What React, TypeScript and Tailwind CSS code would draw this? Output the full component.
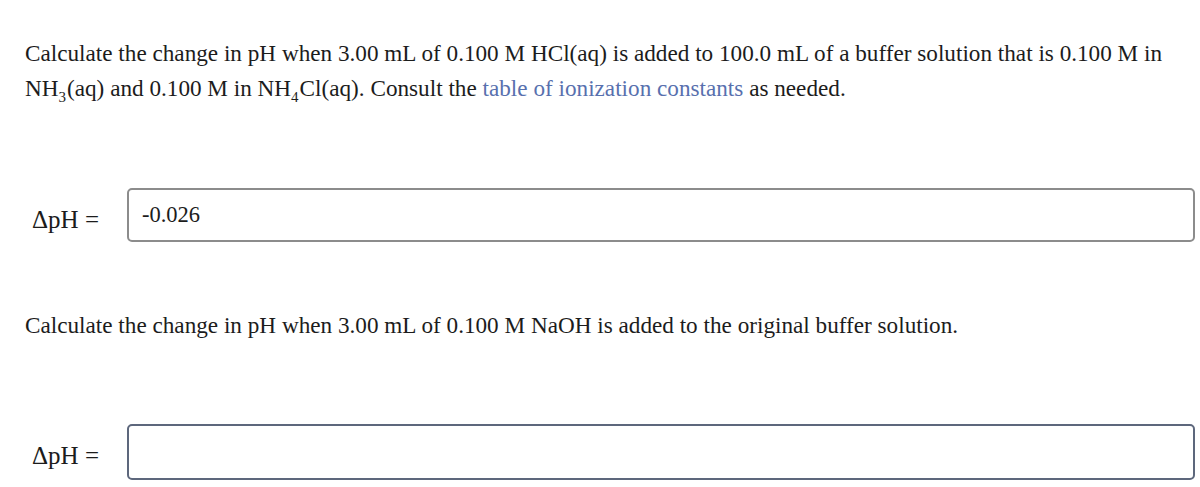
import React from 'react';

const serif = { fontFamily: '"Liberation Serif", "Times New Roman", serif' };

const Sub: React.FC<{ children: React.ReactNode }> = ({ children }) => (
  <span className="text-[15px] relative top-[6px] leading-none pr-[1px]">{children}</span>
);

const App: React.FC = () => {
  return (
    <div
      className="w-[1200px] h-[487px] bg-white text-[#1c1c1c] pl-[25px] pr-[5px] pt-[36px]"
      style={serif}
    >
      <p className="text-[23.2px] leading-[35px]">
        Calculate the change in pH when 3.00 mL of 0.100 M HCl(aq) is added to 100.0 mL of a buffer
        solution that is 0.100 M in
        <br />
        NH<Sub>3</Sub>(aq) and 0.100 M in NH<Sub>4</Sub>Cl(aq). Consult the{' '}
        <a className="text-[#5870ae]">table of ionization constants</a> as needed.
      </p>

      <div className="flex items-start mt-[82px]">
        <span className="text-[25px] leading-[30px] w-[102px] pl-[7px] mt-[17px]">ΔpH =</span>
        <div
          className="flex-1 h-[54px] border-2 border-[#8c8c8c] rounded-[5px] pl-[13px] pt-[12px]"
          style={serif}
        >
          <span className="block text-[22.5px] leading-[26px]">-0.026</span>
        </div>
      </div>

      <p className="text-[23.2px] leading-[35px] mt-[66px]">
        Calculate the change in pH when 3.00 mL of 0.100 M NaOH is added to the original buffer
        solution.
      </p>

      <div className="flex items-start mt-[81px]">
        <span className="text-[25px] leading-[30px] w-[102px] pl-[7px] mt-[17px]">ΔpH =</span>
        <div className="flex-1 h-[56px] border-2 border-[#5d677c] rounded-[5px]" />
      </div>
    </div>
  );
};

export default App;
